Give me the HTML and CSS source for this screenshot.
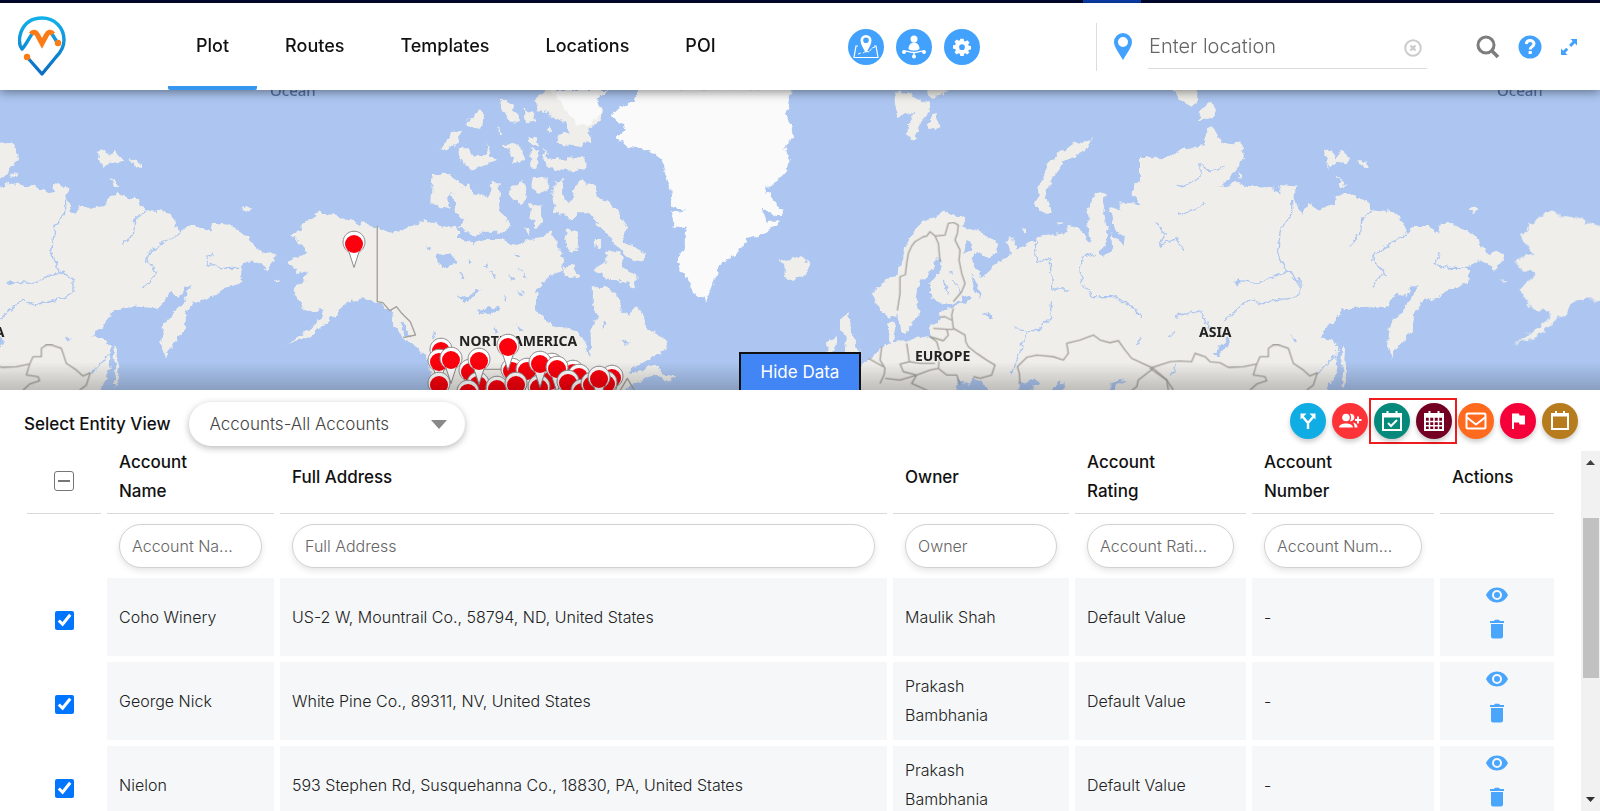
FILE: index.html
```html
<!DOCTYPE html>
<html lang="en">
<head>
<meta charset="utf-8">
<title>Map – Plot</title>
<link rel="stylesheet" href="styles.css">
</head>
<body>
<div class="strip"><span class="strip-mark"></span></div>

<header class="header">
  <a class="logo" href="#" aria-label="Home">
    <svg width="48" height="62" viewBox="0 0 48 62" fill="none" stroke-linecap="round" stroke-linejoin="round">
      <defs><linearGradient id="lg" x1="0" y1="0" x2="0" y2="1"><stop offset="0" stop-color="#12b0ea"/><stop offset="1" stop-color="#0c6dc4"/></linearGradient></defs>
      <path d="M14 18C11 22 8 29 4 33C1 29 1 22 3 16C7 6 15 2 24 2C37 2 46 12 46 24C46 31 43 36 38 41L24 58L9 41M34 18L39 26" stroke="url(#lg)" stroke-width="3.4"/>
      <path d="M13 18C15 15 18 16 19.500 19L24 27.500L28.500 19C30 16 33 15 35 18" stroke="#fb7b16" stroke-width="5" stroke-linecap="butt" stroke-linejoin="miter"/>
      <circle cx="40" cy="27" r="3.200" fill="#fb7b16"/><circle cx="9" cy="41" r="3.200" fill="#fb7b16"/>
    </svg>
  </a>
  <nav class="nav">
    <a class="nav-link active" href="#">Plot</a>
    <a class="nav-link" href="#">Routes</a>
    <a class="nav-link" href="#">Templates</a>
    <a class="nav-link" href="#">Locations</a>
    <a class="nav-link" href="#">POI</a>
  </nav>
  <div class="tools">
    <button class="round" aria-label="Map regions">
      <svg width="26" height="26" viewBox="0 0 26 26"><path d="M5 12H3L1 23.500H25L23 12H21" fill="none" stroke="#fff" stroke-width="1.200"/><path d="M5 20l3-1m2 0l3-2 3 1 3-4 3-1" fill="none" stroke="#fff" stroke-dasharray="3 1"/><path fill="#fff" fill-rule="evenodd" d="M13 19C10 14 7.500 10 7.500 6.500a5.500 5.500 0 0 1 11 0C18.500 10 16 14 13 19zM13 9a2.800 2.800 0 1 0 0-5.600A2.800 2.800 0 0 0 13 9z"/></svg>
    </button>
    <button class="round" aria-label="Territory owners">
      <svg width="26" height="26" viewBox="0 0 26 26" fill="#fff"><circle cx="13" cy="5" r="3.500"/><path d="M7.500 15C7.500 11 10 8.500 13 8.500S18.500 11 18.500 15C16 17 10 17 7.500 15z"/><path d="M3 17.500C6 16 8 18.500 13 18.500S20 16 23 17.500M13 18v4" fill="none" stroke="#fff" stroke-width="1.400"/><circle cx="3" cy="18" r="2"/><circle cx="23" cy="18" r="2"/><circle cx="13" cy="22.500" r="2"/></svg>
    </button>
    <button class="round" aria-label="Settings">
      <svg width="18" height="18" viewBox="0 0 24 24"><path fill="#fff" fill-rule="evenodd" d="M9.800 1h4.400l.6 3 1.700.7L19 3l3 3-1.700 2.500.7 1.700 3 .6v4.400l-3 .6-.7 1.700L22 19l-3 3-2.500-1.700-1.700.7-.6 3H9.800l-.6-3-1.700-.7L5 22l-3-3 1.700-2.500L3 14.800l-3-.6V9.800l3-.6.7-1.700L2 5l3-3 2.500 1.700L9.200 3zM12 16a3.800 3.800 0 1 0 0-7.600 3.800 3.800 0 0 0 0 7.600z"/></svg>
    </button>
  </div>
  <div class="search">
    <svg width="18" height="27" viewBox="0 0 18 27"><path fill="#42a1fc" fill-rule="evenodd" d="M9 27C5 20 0 14 0 9a9 9 0 0 1 18 0c0 5-5 11-9 18zM9 14a5 5 0 1 0 0-10 5 5 0 0 0 0 10z"/></svg>
    <div class="field">
      <input class="location" type="text" placeholder="Enter location" aria-label="Enter location">
      <button class="plain clear" aria-label="Clear"><svg width="18" height="18" viewBox="0 0 18 18" fill="none" stroke="#ccc"><circle cx="9" cy="9" r="7.800" stroke-width="2"/><path d="M6.500 6.500l5 5m0-5l-5 5" stroke-width="2.400"/></svg></button>
    </div>
  </div>
  <div class="utils">
    <button class="plain" aria-label="Search"><svg width="24" height="24" viewBox="0 0 24 24" fill="none" stroke="#7d7d7d"><circle cx="10" cy="10" r="8" stroke-width="3"/><path d="M16 16l6 6" stroke-width="3.600"/></svg></button>
    <button class="plain" aria-label="Help"><svg width="24" height="24" viewBox="0 0 24 24"><circle cx="12" cy="12" r="11.500" fill="#42a1fc"/><path d="M8.200 9C8.500 6.500 10 5.500 12 5.500s4 1.200 4 3.300c0 3-3.800 2.700-3.800 5.700" fill="none" stroke="#fff" stroke-width="3"/><path fill="#fff" d="M10.600 16h3.200v3h-3.200z"/></svg></button>
    <button class="plain" aria-label="Full screen"><svg width="18" height="18" viewBox="0 0 18 18"><path fill="#42a1fc" d="M10.500 1H17v6.500l-2.200-2.200-3.600 3.600-2.100-2.100L12.700 3.200zM1 10.500l2.200 2.200 3-3 2.100 2.100-3 3L7.500 17H1z"/></svg></button>
  </div>
</header>

<main class="main">
<section class="map" aria-label="Map">
<svg class="map-svg" viewBox="0 90 1600 300" preserveAspectRatio="xMidYMid slice">
  <defs>
    <filter id="rough" filterUnits="userSpaceOnUse" x="0" y="60" width="3200" height="360"><feTurbulence type="fractalNoise" baseFrequency="0.13" numOctaves="3" seed="4"/><feDisplacementMap in="SourceGraphic" scale="8" xChannelSelector="R" yChannelSelector="G"/></filter>
    <linearGradient id="shade" x1="0" y1="0" x2="0" y2="1"><stop offset="0" stop-color="#000" stop-opacity="0"/><stop offset="1" stop-color="#000" stop-opacity=".2"/></linearGradient>
    <g id="pin"><path d="M0 23.500L-5 8A11 11 0 1 1 5 8z" fill="#fff" stroke="#8a8a8a"/><circle r="9" fill="#fb000d"/></g>
    <g id="eurasia">
      <g transform="translate(820 80) scale(.33333)">
        <g class="land">
          <path d="M120 860L160 825L185 800L210 790L200 735L220 722L228 755L222 780L262 782L300 768L332 774L328 740L355 725L358 690L400 682L440 662L400 668L345 672L330 650L330 612L362 572L364 545L345 538L330 580L295 610L290 660L302 690L275 740L255 762L240 750L232 702L205 712L180 690L160 650L168 625L232 580L250 520L270 470L305 425L380 395L430 415L425 440L490 455L530 490L535 520L505 535L460 515L455 540L468 570L490 592L530 550L575 520L562 480L582 472L590 512L612 500L650 472L700 465L738 460L745 435L775 442L812 485L805 430L800 400L825 335L857 345L850 400L862 450L858 495L835 522L855 530L877 500L872 462L910 495L915 470L880 445L870 380L905 390L895 370L965 375L938 345L940 310L1000 300L1005 260L1030 235L1100 210L1170 195V940H120z"/>
          <path d="M225 45L240 30L280 50L325 70L330 95L300 130L285 188L262 165L265 125L285 95L235 110L222 80zM305 25H380L375 45L340 50zM330 110L350 105L358 140L340 155L330 145zM665 400L690 402L680 370L675 340L700 290L735 240L810 205L818 175L790 180L730 210L695 240L660 310L652 350L645 375zM608 450L620 445L622 458L610 460zM712 424L735 430L720 432zM60 712L90 700L85 735L100 765L110 800L128 815L100 850H70L80 770L60 740zM18 785L50 765L45 810L20 820z"/>
        </g>
        <g class="water"><path d="M410 935L420 905L450 915L460 895L500 920L505 935zM600 935L598 905L655 898L660 912L625 935zM870 935L868 905L900 900L925 905L890 915L880 935zM425 645L450 655L440 670L428 662zM455 585L465 600L485 640L480 655L462 630zM440 480L455 485L450 510L430 520zM490 697L515 700L512 712L495 710zM335 655L355 650zM680 935L735 905L720 935z"/></g>
        <g class="river"><path d="M825 520L790 530L778 560L785 610L820 650L880 650L950 690L975 740L950 795M580 745L625 755L650 755L690 710L695 670M620 755L600 820L575 880M645 480L650 550L690 530L695 630L745 630M1065 708L1150 695L1170 735M1040 760L1060 780L1045 790M370 600L385 640M400 600L420 640M385 575L395 580"/></g>
      </g>
      <g transform="translate(1150 80) scale(.33333)">
        <g class="land">
          <path d="M-30 940V230L40 235L100 210L160 195L170 150L190 140L212 190L270 185L285 235L250 280L210 322L260 308L290 318L330 318L395 340L390 312L440 320L430 360L455 405L475 375L500 388L550 375L555 345L590 342L625 358L650 355L665 388L740 398L760 430L770 460L790 438L840 438L865 460L870 428L920 435L980 470L1010 515L1030 520L1040 512L1062 525L1055 545L1035 572L1000 545L970 545L955 575L952 612L900 625L860 655L810 665L790 700L785 750L750 790L725 835L715 790L720 735L760 690L790 650L802 618L785 620L770 650L740 635L705 685L640 680L580 688L545 730L508 770L545 780L565 800L560 860L530 940z"/>
          <path d="M70 25H140L138 65L125 80L95 60zM175 60L200 90L190 110L140 124L160 85zM525 215L550 208L555 235L575 210L605 240L590 250L560 245L540 265L528 240zM620 238L660 250L655 264L625 252zM560 290L575 300L590 318L570 318zM952 390L970 378L988 388L975 397zM1050 595L1072 602L1065 608zM575 795L585 810L583 840L592 860L585 910L575 925L580 870L572 830zM265 280L280 285L270 295z"/>
        </g>
        <g class="water"><path d="M188 825L240 768L242 785L205 825zM250 605L262 597L272 610L258 618zM425 772L440 775L432 785z"/></g>
        <g class="river"><path d="M425 360L425 400L395 450L385 520L410 575L320 610L260 605M410 575L450 600V640L410 655L335 672L300 658L220 725M665 390L635 420L632 460L600 495M768 460L720 490L680 515L668 545L705 580L680 600L665 625M870 515L850 550L900 565L965 565M80 315L100 320L150 290L150 255L180 275L225 260M90 402L130 395L160 370M15 430L45 460L30 500L80 472L105 515M75 708L155 692L180 750M560 825L520 860L505 880M55 770L75 755M65 885L80 850"/></g>
      </g>
    </g>
    <g id="borders" class="border">
      <path transform="translate(820 80) scale(.33333)" d="M232 692L240 640L240 590L256 584L260 550L265 520L275 498L285 485L310 470L320 468L330 455L345 468L375 465L385 430L400 427L415 435L412 460L405 480L420 510L417 540L425 580L435 610L425 635L400 665M345 468L355 490L360 545M400 685L395 705L400 745L435 765L437 785L445 800L470 820L500 840L525 855L515 885L480 895L460 890M185 800L180 840L195 865L192 885L180 910M260 790L268 845L240 852L250 875L290 885L330 870L355 865L380 885L410 885L420 915M355 865L360 820L350 785L330 770L370 782L385 765L380 748L340 745M360 712L375 710L398 722M380 748L400 748M195 895L240 900L290 885L275 910L330 935M300 850L345 850M240 852L268 845L300 850M145 835L190 860M600 910L598 880L592 860L620 832L650 825L700 830L730 840L745 820L740 790L780 780L820 765L840 780L870 788L895 782L915 810L935 835L1000 865L955 900L950 920L930 935M1000 865L1040 900L1060 930"/>
      <path transform="translate(1150 80) scale(.33333)" d="M0 865L30 855L60 845L90 843L125 845L135 820L165 830L180 845L210 848L235 862L280 860L320 852L330 830L355 830V805L370 795L385 795L415 805L430 850L460 870L480 888L502 878L490 915L470 930M320 852L310 885L345 890L350 902L320 912L300 930M0 865L50 900L55 930"/>
    </g>
    <g id="alaska" transform="translate(0 80) scale(.34439 .33333)">
      <path class="land" d="M1200 440L1155 470L1095 440L1000 415L930 395L880 430L875 450L845 467L870 490L890 520L835 545L860 575L895 575L880 600L850 635L880 680L900 695L940 690L930 720L880 760L825 797L850 785L900 770L960 715L985 700L1000 668L1050 655L1095 668L1130 690L1160 740L1185 775L1245 815L1260 940H1330V440z"/>
    </g>
    <g id="oceanLabel"><text class="ocean" x="270" y="96">Ocean</text></g>
  </defs>
  <rect x="0" y="90" width="1600" height="300" fill="#acc6f1"/>
  <g filter="url(#rough)">
    <use href="#eurasia"/><use href="#eurasia" x="-1227"/>
    <use href="#alaska"/><use href="#alaska" x="1227"/>
    <g transform="translate(400 80) scale(.34439 .33333)">
      <g class="land">
        <path d="M-20 460L30 440L65 425L110 430L140 455L180 480L210 490L250 480L300 480L340 495L370 480L410 470L440 450L455 490L475 530L470 570L420 600L395 640V690L430 730L480 740L520 760L540 800L545 832L555 800L552 745L575 710L560 670V622L600 620L640 655L640 690L665 705L690 680L715 740L770 780L775 810L740 830L700 850L660 880L700 872L750 850L760 880L800 890L780 905L740 880L700 900L640 940H90L85 850L60 810L20 780L-20 740z"/>
        <path d="M95 280L130 278L185 315L160 340L140 355L145 380L120 385L88 365zM200 310L215 340L260 350L265 310L290 310L288 380L320 440L300 455L240 455L220 470L170 440L190 425L160 395L165 370L150 350L180 320zM318 340L325 320L345 318L355 295L368 345L355 380L335 360zM385 295L435 292L432 330L400 345L385 320zM378 370L410 375L415 430L395 440L375 400zM450 305L480 300L470 340L490 370L520 305L560 310L575 350L600 360L630 400L660 440L650 480L690 510L715 520L700 545L660 530L620 490L590 450L550 400L520 400L500 420L450 395L442 350zM485 445L520 460L515 510L495 520L480 480zM120 205L155 152L185 155L155 195L135 212zM170 205L200 205L220 225L250 225L250 185L260 225L282 240L240 255L205 275L195 245L170 240zM300 195L350 190L360 240L330 250L320 220zM378 205L400 215L400 265L382 262zM415 205L440 240L490 235L540 225L538 268L480 272L425 262zM195 130L230 88L245 105L235 150L205 145zM285 60L310 60L345 105L345 130L320 125L300 90zM358 85L390 105L385 130L368 120zM400 90L390 60L420 30H610L560 50L590 90L585 120L550 145L555 185L520 200L450 190L460 165L490 160L480 130L430 100zM565 480L588 480L585 500L568 502zM475 560L500 555L520 590L495 595L475 585zM595 510L640 520L650 560L690 590L680 625L640 600L600 600L590 575L558 570L600 550zM375 172L400 175L405 200L380 190zM1100 545L1160 530L1192 550L1180 580L1145 598L1115 590L1118 565zM360 445L375 450L370 470zM285 140L295 160L288 162zM430 135L440 155L430 155z"/>
      </g>
      <path class="ice" d="M690 25H1140L1120 100L1145 170L1115 200L1135 250L1100 300L1060 325L1110 395L1100 410L1050 385L1065 425L1105 425L1060 460L1005 475L990 510L930 550L910 620L890 660L850 635L830 590L805 540L830 500V440L795 440L790 400L830 390L790 380L785 330L760 240L720 210L660 200L625 170L660 150L612 105L640 80L680 65zM440 30H600L570 60L585 100L545 140L510 130L480 90z"/>
      <path class="water" d="M105 520L160 530L165 550L130 560L110 550zM165 640L190 655L220 630L240 625L215 645L190 675zM170 570L190 590L185 600zM200 530L210 550L200 560zM225 690L290 680L280 695L235 702zM75 495L90 505L85 512zM260 575L280 585L275 595zM320 580L330 600L322 605zM360 570L370 600L360 590zM300 640L310 660L300 655zM340 630L355 650L345 650zM270 740L285 760L275 765zM340 730L360 750L350 755zM240 560L250 545L255 565zM330 520L350 525L340 530zM350 625L365 640L360 645zM590 720L600 735L585 740zM640 780L665 785L650 792zM345 560L352 575L348 578zM0 725L15 740L30 775L15 768zM90 755L108 770L100 778z"/>
    </g>
  </g>
  <use href="#borders"/><use href="#borders" x="-1227"/>
  <path class="border" transform="translate(400 80) scale(.34439 .33333)" d="M-66 437V665L-50 668L-30 692L-10 680L5 700L30 725L45 765L10 773M190 868H345L420 895L520 920M640 930L660 895L680 930"/>
  <use href="#oceanLabel"/><use href="#oceanLabel" x="1227"/>
  <g class="continent">
    <text x="459" y="346">NORTH AMERICA</text><text x="915" y="361">EUROPE</text><text x="1199" y="337">ASIA</text><text x="-28" y="337">ASIA</text>
  </g>
  <use href="#pin" x="354" y="244"/>
  <use href="#pin" x="441" y="351"/><use href="#pin" x="439" y="362"/><use href="#pin" x="470" y="372"/><use href="#pin" x="512" y="371"/><use href="#pin" x="527" y="371"/><use href="#pin" x="552" y="366"/><use href="#pin" x="573" y="373"/><use href="#pin" x="612" y="378"/><use href="#pin" x="579" y="377"/>
  <use href="#pin" x="451" y="360"/><use href="#pin" x="478" y="385"/><use href="#pin" x="479" y="361"/><use href="#pin" x="508" y="347"/><use href="#pin" x="439" y="385"/><use href="#pin" x="468" y="393"/><use href="#pin" x="497" y="389"/><use href="#pin" x="550" y="381"/><use href="#pin" x="539" y="388"/><use href="#pin" x="516" y="385"/><use href="#pin" x="540" y="364"/><use href="#pin" x="557" y="369"/><use href="#pin" x="568" y="383"/><use href="#pin" x="582" y="392"/><use href="#pin" x="592" y="385"/><use href="#pin" x="606" y="384"/><use href="#pin" x="599" y="379"/>
  <rect x="0" y="362" width="1600" height="28" fill="url(#shade)"/>
</svg>
<button class="hide-data">Hide Data</button>
</section>

<section class="panel">
  <div class="toolbar">
    <label class="entity-label" for="entity">Select Entity View</label>
    <div class="select-wrap">
      <select class="entity" id="entity"><option>Accounts-All Accounts</option></select>
      <svg class="caret" width="16" height="9" viewBox="0 0 16 9"><path fill="#888" d="M0 0h16L8 9z"/></svg>
    </div>
    <div class="actions">
      <button class="round shadow cyan" aria-label="Add to route"><svg width="22" height="22" viewBox="0 0 22 22" fill="none" stroke="#fff" stroke-width="2.400"><path d="M11 19v-6L5 6M11 13L17 6"/><path fill="#fff" stroke="none" d="M3.500 3.500h6l-6 6zM18.500 3.500h-6l6 6z"/></svg></button>
      <button class="round shadow red" aria-label="Add to marketing list"><svg width="24" height="20" viewBox="0 0 24 20" fill="#fff"><circle cx="8" cy="6.500" r="3.800"/><path d="M1 16.500C1 11 15 11 15 16.500zM12 2.700a3.800 3.800 0 1 1 0 7.500c1.400-2 1.400-5.500 0-7.500zM15 11.500c3 .8 4.500 2.500 4.500 5h-3c0-2-.3-3.500-1.500-5zM19 5.500h2V8h2.500v2H21v2.500h-2V10h-2V8h2z"/></svg></button>
      <span class="marked">
        <button class="round shadow teal" aria-label="Create appointment"><svg width="22" height="22" viewBox="0 0 22 22" fill="none" stroke="#fff" stroke-width="2"><path d="M2 4h18v16H2zM6.500 1v5M15.500 1v5"/><path d="M2 6h18" stroke-width="3"/><path d="M7 13l3 3 6-6"/></svg></button>
        <button class="round shadow maroon" aria-label="Schedule"><svg width="22" height="22" viewBox="0 0 22 22" fill="none" stroke="#fff" stroke-width="2"><path d="M2 4h18v16H2zM6.500 1v5M15.500 1v5"/><path d="M2 6h18" stroke-width="3.500"/><path d="M2 11.500h18M2 15.700h18M6.500 7v13M11 7v13M15.500 7v13" stroke-width="1.500"/></svg></button>
      </span>
      <button class="round shadow orange" aria-label="Send email"><svg width="22" height="18" viewBox="0 0 22 18" fill="none" stroke="#fff" stroke-width="2" stroke-linejoin="round"><rect x="1.500" y="1.500" width="19" height="15" rx="1.500"/><path d="M2 5.500l9 7 9-7"/></svg></button>
      <button class="round shadow crimson" aria-label="Flag"><svg width="18" height="18" viewBox="0 0 18 18"><path fill="#fff" d="M3 1.500h7l.5 2H16v9h-5.500l-.5-2H5V17H3z"/></svg></button>
      <button class="round shadow brown" aria-label="Calendar"><svg width="20" height="22" viewBox="0 0 20 22" fill="none" stroke="#fff" stroke-width="2"><path d="M2 4h16v15H2zM6 1v4M14 1v4"/><path d="M2 5h16" stroke-width="3"/></svg></button>
    </div>
  </div>

  <div class="table-area">
    <div class="table-scroll">
      <table class="grid">
        <colgroup><col class="c-check"><col class="c-name"><col><col class="c-owner"><col class="c-rating"><col class="c-number"><col class="c-actions"></colgroup>
        <thead>
          <tr><th class="check-head"><button class="minus" aria-label="Clear selection"></button></th><th>Account<br>Name</th><th>Full Address</th><th>Owner</th><th>Account<br>Rating</th><th>Account<br>Number</th><th>Actions</th></tr>
          <tr class="filters"><td></td>
            <td><input class="filter" type="text" placeholder="Account Na..." aria-label="Account Name"></td>
            <td><input class="filter" type="text" placeholder="Full Address" aria-label="Full Address"></td>
            <td><input class="filter" type="text" placeholder="Owner" aria-label="Owner"></td>
            <td><input class="filter" type="text" placeholder="Account Rati..." aria-label="Account Rating"></td>
            <td><input class="filter" type="text" placeholder="Account Num..." aria-label="Account Number"></td><td></td></tr>
        </thead>
        <tbody>
          <tr><td class="check-cell"><input class="check" type="checkbox" checked aria-label="Coho Winery"></td><td>Coho Winery</td><td>US-2 W, Mountrail Co., 58794, ND, United States</td><td>Maulik Shah</td><td>Default Value</td><td>-</td>
            <td><div class="row-actions"><button class="plain" aria-label="View"><svg width="22" height="16" viewBox="0 0 22 16"><path fill="#4aa5fd" fill-rule="evenodd" d="M11 .5C6 .5 2 3.500 0 8c2 4.500 6 7.500 11 7.500S20 12.500 22 8C20 3.500 16 .5 11 .5zM11 13A5 5 0 1 1 11 3a5 5 0 0 1 0 10zm0-2a3 3 0 1 0 0-6 3 3 0 0 0 0 6z"/></svg></button><button class="plain" aria-label="Delete"><svg width="16" height="20" viewBox="0 0 16 20"><path fill="#4aa5fd" d="M1 2h4l1-1.200h4L11 2h4v2H1zM2 5h12v12.500a2 2 0 0 1-2 2H4a2 2 0 0 1-2-2z"/></svg></button></div></td></tr>
          <tr><td class="check-cell"><input class="check" type="checkbox" checked aria-label="George Nick"></td><td>George Nick</td><td>White Pine Co., 89311, NV, United States</td><td>Prakash<br>Bambhania</td><td>Default Value</td><td>-</td>
            <td><div class="row-actions"><button class="plain" aria-label="View"><svg width="22" height="16" viewBox="0 0 22 16"><path fill="#4aa5fd" fill-rule="evenodd" d="M11 .5C6 .5 2 3.500 0 8c2 4.500 6 7.500 11 7.500S20 12.500 22 8C20 3.500 16 .5 11 .5zM11 13A5 5 0 1 1 11 3a5 5 0 0 1 0 10zm0-2a3 3 0 1 0 0-6 3 3 0 0 0 0 6z"/></svg></button><button class="plain" aria-label="Delete"><svg width="16" height="20" viewBox="0 0 16 20"><path fill="#4aa5fd" d="M1 2h4l1-1.200h4L11 2h4v2H1zM2 5h12v12.500a2 2 0 0 1-2 2H4a2 2 0 0 1-2-2z"/></svg></button></div></td></tr>
          <tr><td class="check-cell"><input class="check" type="checkbox" checked aria-label="Nielon"></td><td>Nielon</td><td>593 Stephen Rd, Susquehanna Co., 18830, PA, United States</td><td>Prakash<br>Bambhania</td><td>Default Value</td><td>-</td>
            <td><div class="row-actions"><button class="plain" aria-label="View"><svg width="22" height="16" viewBox="0 0 22 16"><path fill="#4aa5fd" fill-rule="evenodd" d="M11 .5C6 .5 2 3.500 0 8c2 4.500 6 7.500 11 7.500S20 12.500 22 8C20 3.500 16 .5 11 .5zM11 13A5 5 0 1 1 11 3a5 5 0 0 1 0 10zm0-2a3 3 0 1 0 0-6 3 3 0 0 0 0 6z"/></svg></button><button class="plain" aria-label="Delete"><svg width="16" height="20" viewBox="0 0 16 20"><path fill="#4aa5fd" d="M1 2h4l1-1.200h4L11 2h4v2H1zM2 5h12v12.500a2 2 0 0 1-2 2H4a2 2 0 0 1-2-2z"/></svg></button></div></td></tr>
        </tbody>
      </table>
    </div>
    <div class="scrollbar">
      <svg width="9" height="5" viewBox="0 0 9 5"><path d="M0 5h9L4.500 0z" fill="#404040"/></svg>
      <div class="track"><div class="thumb"></div></div>
      <svg width="9" height="5" viewBox="0 0 9 5"><path d="M0 0h9L4.500 5z" fill="#303030"/></svg>
    </div>
  </div>
</section>
</main>
</body>
</html>
```
FILE: styles.css
```css
* { box-sizing: border-box; }
body { margin: 0; height: 100vh; display: flex; flex-direction: column; overflow: hidden; background: #fff; color: #111; font: 400 16px/24px Inter, "Open Sans", sans-serif; }
button, input, select { font: inherit; color: inherit; margin: 0; }
button { border: 0; padding: 0; background: none; cursor: pointer; }
svg { display: block; flex: none; }

.strip { flex: none; height: 3px; background: #02082e; }
.strip-mark { display: block; width: 58px; height: 3px; margin-left: 1083px; background: #0b3fae; }

.header { position: relative; z-index: 2; flex: none; height: 87px; display: flex; align-items: center; padding: 0 22px 0 18px; background: #fff; box-shadow: 0 2px 10px rgba(0, 0, 0, .45); }
.logo { width: 150px; }
.nav { display: flex; align-self: stretch; flex: 1; }
.nav-link { display: flex; align-items: center; padding: 4px 28px 2px; color: #111; font-size: 18px; font-weight: 500; text-decoration: none; border-bottom: 4px solid transparent; border-radius: 2px; }
.nav-link.active { border-bottom-color: #3496ef; }
.tools { display: flex; gap: 12px; }
.round { width: 36px; height: 36px; flex: none; border-radius: 50%; display: grid; place-items: center; background: #42a1fc; }
.search { display: flex; align-items: center; gap: 16px; height: 48px; margin-left: 116px; padding-left: 17px; border-left: 1px solid #dcdcdc; }
.field { display: flex; align-items: center; width: 279px; height: 44px; padding: 0 5px 0 1px; border-bottom: 1px solid #dcdcdc; }
.location { flex: 1; min-width: 0; border: 0; outline: 0; background: none; padding: 0; font-size: 20px; font-weight: 300; }
.location::placeholder { color: #666; opacity: 1; }
.clear { padding-top: 4px; }
.utils { display: flex; align-items: center; gap: 18px; margin-left: 49px; }
.plain { display: grid; place-items: center; }

.main { flex: 1; min-height: 0; display: flex; flex-direction: column; }
.map { position: relative; flex: none; height: 300px; }
.map-svg { width: 100%; height: 100%; }
.land { fill: #efeeea; }
.ice { fill: #fafafa; }
.water { fill: #acc6f1; }
.river { fill: none; stroke: #acc6f1; stroke-width: 4; }
.border { fill: none; stroke: #a5a19b; stroke-width: 4; stroke-linejoin: round; }
.ocean { font: 500 15px "Noto Sans", sans-serif; fill: #5672a5; }
.continent { font: 700 14px "Noto Sans", sans-serif; fill: #222; stroke: #efeeea; stroke-width: 2px; paint-order: stroke; }
.hide-data { position: absolute; left: 50%; bottom: 0; width: 122px; height: 38px; margin-left: -61px; background: #4285f4; border: 2px solid #111; border-bottom: 0; color: #fff; font-size: 17px; }

.panel { position: relative; flex: 1; min-height: 0; display: flex; flex-direction: column; background: #fff; }
.toolbar { flex: none; height: 61px; display: flex; align-items: center; padding: 7px 22px 0 24px; }
.entity-label { font-size: 17px; font-weight: 500; }
.select-wrap { position: relative; margin-left: 18px; }
.entity { appearance: none; width: 276px; height: 44px; border: 0; border-radius: 22px; padding: 0 40px 0 21px; background: #fff; box-shadow: 0 2px 7px rgba(0, 0, 0, .28); color: #444; font-size: 17px; font-weight: 300; }
.caret { position: absolute; right: 18px; top: 18px; pointer-events: none; }
.actions { display: flex; align-items: center; gap: 6px; margin-left: auto; padding-bottom: 7px; }
.shadow { box-shadow: 0 3px 5px rgba(0, 0, 0, .2); }
.marked { display: flex; gap: 6px; padding: 3px; margin: 0 -5px; border: 2px solid #ee1c1c; }
.cyan { background: #0fade3; }
.red { background: #fd3338; }
.teal { background: #04897a; }
.maroon { background: #730022; }
.orange { background: #ff6a1e; }
.crimson { background: #f50038; }
.brown { background: #b67b1d; }

.table-area { flex: 1; min-height: 0; display: flex; }
.table-scroll { flex: 1; min-width: 0; overflow: hidden; padding: 0 21px; }
.grid { width: 100%; margin-top: -9px; table-layout: fixed; border-collapse: separate; border-spacing: 6px; line-height: 29px; }
.c-check { width: 74px; }
.c-name { width: 167px; }
.c-owner { width: 176px; }
.c-rating { width: 171px; }
.c-number { width: 182px; }
.c-actions { width: 114px; }
.grid th { height: 66px; padding: 0 12px 7px; border-bottom: 1px solid #dadada; font-size: 17px; font-weight: 500; text-align: left; vertical-align: middle; }
.grid td { height: 78px; padding: 0 12px; background: #f5f7f9; color: #222; font-weight: 300; }
.grid .filters td { height: 52px; background: none; }
.grid .check-head { padding: 0; text-align: center; }
.grid .check-cell { background: none; text-align: center; padding: 4px 0 0; }
.filter { display: block; width: 100%; height: 44px; border: 1px solid #d2d2d2; border-radius: 22px; padding: 0 12px; background: #fff; box-shadow: 0 3px 6px rgba(0, 0, 0, .1); outline: 0; }
.filter::placeholder { color: #666; opacity: 1; }
.minus { display: inline-grid; place-items: center; width: 20px; height: 20px; border: 1px solid #767676; border-radius: 3px; vertical-align: middle; }
.minus::before { content: ""; width: 12px; height: 2px; background: #767676; }
.check { width: 19px; height: 19px; vertical-align: middle; accent-color: #0075ff; }
.row-actions { display: flex; flex-direction: column; align-items: center; gap: 16px; padding-bottom: 8px; }

.scrollbar { width: 19px; display: flex; flex-direction: column; align-items: center; justify-content: space-between; padding: 9px 0; background: #f1f1f1; }
.track { flex: 1; width: 16px; padding-top: 53px; }
.thumb { height: 160px; background: #c1c1c1; }
```
